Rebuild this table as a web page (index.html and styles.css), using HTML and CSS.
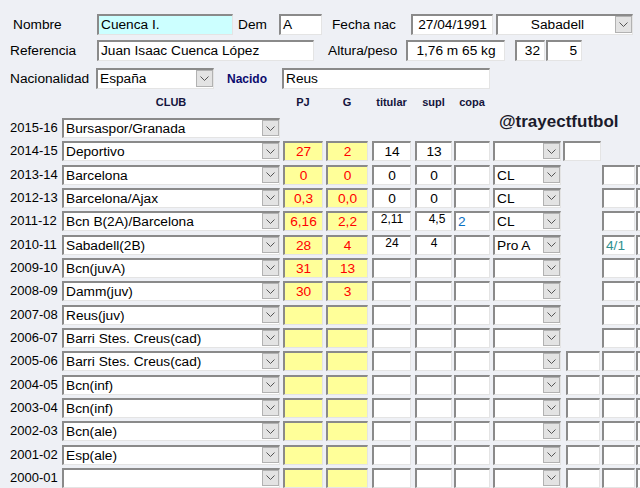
FILE: index.html
```html
<!DOCTYPE html>
<html>
<head>
<meta charset="utf-8">
<link rel="stylesheet" href="styles.css">
</head>
<body>
<div class="form">
  <div class="frow r1">
    <span class="lbl l-nombre">Nombre</span>
    <div class="box tall cyan w-nombre">Cuenca I.</div>
    <span class="lbl l-dem">Dem</span>
    <div class="box tall w-dem">A</div>
    <span class="lbl l-fecha">Fecha nac</span>
    <div class="box tall center w-fecha">27/04/1991</div>
    <div class="box tall sel w-ciudad"><span class="txt center">Sabadell</span><span class="btn"><svg width="9" height="5" viewBox="0 0 9 5"><path d="M0.5 0.5 L4.5 4.5 L8.5 0.5" fill="none" stroke="#555" stroke-width="1"/></svg></span></div>
  </div>
  <div class="frow r2">
    <span class="lbl l-ref">Referencia</span>
    <div class="box tall w-ref">Juan Isaac Cuenca López</div>
    <span class="lbl l-alt">Altura/peso</span>
    <div class="box tall center w-alt">1,76 m 65 kg</div>
    <div class="box tall right w-n1">32</div>
    <div class="box tall right w-n2">5</div>
  </div>
  <div class="frow r3">
    <span class="lbl l-nac">Nacionalidad</span>
    <div class="box tall sel w-nac"><span class="txt">España</span><span class="btn"><svg width="9" height="5" viewBox="0 0 9 5"><path d="M0.5 0.5 L4.5 4.5 L8.5 0.5" fill="none" stroke="#555" stroke-width="1"/></svg></span></div>
    <span class="lbl nacido">Nacido</span>
    <div class="box tall w-lugar">Reus</div>
  </div>
</div>

<div class="table">
  <div class="trow head">
    <span></span>
    <span class="h w-club">CLUB</span>
    <span class="h w-pj">PJ</span>
    <span class="h w-g">G</span>
    <span class="h w-tit">titular</span>
    <span class="h w-sup">supl</span>
    <span class="h w-copa">copa</span>
  </div>

  <div class="trow">
    <span class="year">2015-16</span>
    <div class="box sel w-club"><span class="txt">Bursaspor/Granada</span><span class="btn"><svg width="9" height="5" viewBox="0 0 9 5"><path d="M0.5 0.5 L4.5 4.5 L8.5 0.5" fill="none" stroke="#555" stroke-width="1"/></svg></span></div>
    <div class="tag">@trayectfutbol</div>
  </div>

  <div class="trow">
    <span class="year">2014-15</span>
    <div class="box sel w-club"><span class="txt">Deportivo</span><span class="btn"><svg width="9" height="5" viewBox="0 0 9 5"><path d="M0.5 0.5 L4.5 4.5 L8.5 0.5" fill="none" stroke="#555" stroke-width="1"/></svg></span></div>
    <div class="box yel red w-pj">27</div>
    <div class="box yel red w-g">2</div>
    <div class="box center w-tit">14</div>
    <div class="box center w-sup">13</div>
    <div class="box w-copa"></div>
    <div class="box sel w-comp"><span class="txt"></span><span class="btn"><svg width="9" height="5" viewBox="0 0 9 5"><path d="M0.5 0.5 L4.5 4.5 L8.5 0.5" fill="none" stroke="#555" stroke-width="1"/></svg></span></div>
    <div class="extras"><div class="box x-a"></div></div>
  </div>

  <div class="trow">
    <span class="year">2013-14</span>
    <div class="box sel w-club"><span class="txt">Barcelona</span><span class="btn"><svg width="9" height="5" viewBox="0 0 9 5"><path d="M0.5 0.5 L4.5 4.5 L8.5 0.5" fill="none" stroke="#555" stroke-width="1"/></svg></span></div>
    <div class="box yel red w-pj">0</div>
    <div class="box yel red w-g">0</div>
    <div class="box center w-tit">0</div>
    <div class="box center w-sup">0</div>
    <div class="box w-copa"></div>
    <div class="box sel w-comp"><span class="txt">CL</span><span class="btn"><svg width="9" height="5" viewBox="0 0 9 5"><path d="M0.5 0.5 L4.5 4.5 L8.5 0.5" fill="none" stroke="#555" stroke-width="1"/></svg></span></div>
    <div class="extras ex-b"><div class="box x-2"></div><div class="box x-3"></div></div>
  </div>

  <div class="trow">
    <span class="year">2012-13</span>
    <div class="box sel w-club"><span class="txt">Barcelona/Ajax</span><span class="btn"><svg width="9" height="5" viewBox="0 0 9 5"><path d="M0.5 0.5 L4.5 4.5 L8.5 0.5" fill="none" stroke="#555" stroke-width="1"/></svg></span></div>
    <div class="box yel red w-pj">0,3</div>
    <div class="box yel red w-g">0,0</div>
    <div class="box center w-tit">0</div>
    <div class="box center w-sup">0</div>
    <div class="box w-copa"></div>
    <div class="box sel w-comp"><span class="txt">CL</span><span class="btn"><svg width="9" height="5" viewBox="0 0 9 5"><path d="M0.5 0.5 L4.5 4.5 L8.5 0.5" fill="none" stroke="#555" stroke-width="1"/></svg></span></div>
    <div class="extras ex-b"><div class="box x-2"></div><div class="box x-3"></div></div>
  </div>

  <div class="trow">
    <span class="year">2011-12</span>
    <div class="box sel w-club"><span class="txt">Bcn B(2A)/Barcelona</span><span class="btn"><svg width="9" height="5" viewBox="0 0 9 5"><path d="M0.5 0.5 L4.5 4.5 L8.5 0.5" fill="none" stroke="#555" stroke-width="1"/></svg></span></div>
    <div class="box yel red w-pj">6,16</div>
    <div class="box yel red w-g">2,2</div>
    <div class="box center small w-tit">2,11</div>
    <div class="box center small w-sup"><span class="nudge">4,5</span></div>
    <div class="box blue w-copa">2</div>
    <div class="box sel w-comp"><span class="txt">CL</span><span class="btn"><svg width="9" height="5" viewBox="0 0 9 5"><path d="M0.5 0.5 L4.5 4.5 L8.5 0.5" fill="none" stroke="#555" stroke-width="1"/></svg></span></div>
    <div class="extras ex-b"><div class="box x-2"></div><div class="box x-3"></div></div>
  </div>

  <div class="trow">
    <span class="year">2010-11</span>
    <div class="box sel w-club"><span class="txt">Sabadell(2B)</span><span class="btn"><svg width="9" height="5" viewBox="0 0 9 5"><path d="M0.5 0.5 L4.5 4.5 L8.5 0.5" fill="none" stroke="#555" stroke-width="1"/></svg></span></div>
    <div class="box yel red w-pj">28</div>
    <div class="box yel red w-g">4</div>
    <div class="box center small w-tit">24</div>
    <div class="box center small w-sup">4</div>
    <div class="box w-copa"></div>
    <div class="box sel w-comp"><span class="txt">Pro A</span><span class="btn"><svg width="9" height="5" viewBox="0 0 9 5"><path d="M0.5 0.5 L4.5 4.5 L8.5 0.5" fill="none" stroke="#555" stroke-width="1"/></svg></span></div>
    <div class="extras ex-b"><div class="box teal x-2">4/1</div><div class="box x-3"></div></div>
  </div>

  <div class="trow">
    <span class="year">2009-10</span>
    <div class="box sel w-club"><span class="txt">Bcn(juvA)</span><span class="btn"><svg width="9" height="5" viewBox="0 0 9 5"><path d="M0.5 0.5 L4.5 4.5 L8.5 0.5" fill="none" stroke="#555" stroke-width="1"/></svg></span></div>
    <div class="box yel red w-pj">31</div>
    <div class="box yel red w-g">13</div>
    <div class="box w-tit"></div>
    <div class="box w-sup"></div>
    <div class="box w-copa"></div>
    <div class="box sel w-comp"><span class="txt"></span><span class="btn"><svg width="9" height="5" viewBox="0 0 9 5"><path d="M0.5 0.5 L4.5 4.5 L8.5 0.5" fill="none" stroke="#555" stroke-width="1"/></svg></span></div>
    <div class="extras ex-b"><div class="box x-2"></div><div class="box x-3"></div></div>
  </div>

  <div class="trow">
    <span class="year">2008-09</span>
    <div class="box sel w-club"><span class="txt">Damm(juv)</span><span class="btn"><svg width="9" height="5" viewBox="0 0 9 5"><path d="M0.5 0.5 L4.5 4.5 L8.5 0.5" fill="none" stroke="#555" stroke-width="1"/></svg></span></div>
    <div class="box yel red w-pj">30</div>
    <div class="box yel red w-g">3</div>
    <div class="box w-tit"></div>
    <div class="box w-sup"></div>
    <div class="box w-copa"></div>
    <div class="box sel w-comp"><span class="txt"></span><span class="btn"><svg width="9" height="5" viewBox="0 0 9 5"><path d="M0.5 0.5 L4.5 4.5 L8.5 0.5" fill="none" stroke="#555" stroke-width="1"/></svg></span></div>
    <div class="extras ex-b"><div class="box x-2"></div><div class="box x-3"></div></div>
  </div>

  <div class="trow">
    <span class="year">2007-08</span>
    <div class="box sel w-club"><span class="txt">Reus(juv)</span><span class="btn"><svg width="9" height="5" viewBox="0 0 9 5"><path d="M0.5 0.5 L4.5 4.5 L8.5 0.5" fill="none" stroke="#555" stroke-width="1"/></svg></span></div>
    <div class="box yel w-pj"></div>
    <div class="box yel w-g"></div>
    <div class="box w-tit"></div>
    <div class="box w-sup"></div>
    <div class="box w-copa"></div>
    <div class="box sel w-comp"><span class="txt"></span><span class="btn"><svg width="9" height="5" viewBox="0 0 9 5"><path d="M0.5 0.5 L4.5 4.5 L8.5 0.5" fill="none" stroke="#555" stroke-width="1"/></svg></span></div>
    <div class="extras ex-b"><div class="box x-2"></div><div class="box x-3"></div></div>
  </div>

  <div class="trow">
    <span class="year">2006-07</span>
    <div class="box sel w-club"><span class="txt">Barri Stes. Creus(cad)</span><span class="btn"><svg width="9" height="5" viewBox="0 0 9 5"><path d="M0.5 0.5 L4.5 4.5 L8.5 0.5" fill="none" stroke="#555" stroke-width="1"/></svg></span></div>
    <div class="box yel w-pj"></div>
    <div class="box yel w-g"></div>
    <div class="box w-tit"></div>
    <div class="box w-sup"></div>
    <div class="box w-copa"></div>
    <div class="box sel w-comp"><span class="txt"></span><span class="btn"><svg width="9" height="5" viewBox="0 0 9 5"><path d="M0.5 0.5 L4.5 4.5 L8.5 0.5" fill="none" stroke="#555" stroke-width="1"/></svg></span></div>
    <div class="extras ex-b"><div class="box x-2"></div><div class="box x-3"></div></div>
  </div>

  <div class="trow">
    <span class="year">2005-06</span>
    <div class="box sel w-club"><span class="txt">Barri Stes. Creus(cad)</span><span class="btn"><svg width="9" height="5" viewBox="0 0 9 5"><path d="M0.5 0.5 L4.5 4.5 L8.5 0.5" fill="none" stroke="#555" stroke-width="1"/></svg></span></div>
    <div class="box yel w-pj"></div>
    <div class="box yel w-g"></div>
    <div class="box w-tit"></div>
    <div class="box w-sup"></div>
    <div class="box w-copa"></div>
    <div class="box sel w-comp"><span class="txt"></span><span class="btn"><svg width="9" height="5" viewBox="0 0 9 5"><path d="M0.5 0.5 L4.5 4.5 L8.5 0.5" fill="none" stroke="#555" stroke-width="1"/></svg></span></div>
    <div class="extras ex-c"><div class="box x-1"></div><div class="box x-2"></div><div class="box x-3"></div></div>
  </div>

  <div class="trow">
    <span class="year">2004-05</span>
    <div class="box sel w-club"><span class="txt">Bcn(inf)</span><span class="btn"><svg width="9" height="5" viewBox="0 0 9 5"><path d="M0.5 0.5 L4.5 4.5 L8.5 0.5" fill="none" stroke="#555" stroke-width="1"/></svg></span></div>
    <div class="box yel w-pj"></div>
    <div class="box yel w-g"></div>
    <div class="box w-tit"></div>
    <div class="box w-sup"></div>
    <div class="box w-copa"></div>
    <div class="box sel w-comp"><span class="txt"></span><span class="btn"><svg width="9" height="5" viewBox="0 0 9 5"><path d="M0.5 0.5 L4.5 4.5 L8.5 0.5" fill="none" stroke="#555" stroke-width="1"/></svg></span></div>
    <div class="extras ex-c"><div class="box x-1"></div><div class="box x-2"></div><div class="box x-3"></div></div>
  </div>

  <div class="trow">
    <span class="year">2003-04</span>
    <div class="box sel w-club"><span class="txt">Bcn(inf)</span><span class="btn"><svg width="9" height="5" viewBox="0 0 9 5"><path d="M0.5 0.5 L4.5 4.5 L8.5 0.5" fill="none" stroke="#555" stroke-width="1"/></svg></span></div>
    <div class="box yel w-pj"></div>
    <div class="box yel w-g"></div>
    <div class="box w-tit"></div>
    <div class="box w-sup"></div>
    <div class="box w-copa"></div>
    <div class="box sel w-comp"><span class="txt"></span><span class="btn"><svg width="9" height="5" viewBox="0 0 9 5"><path d="M0.5 0.5 L4.5 4.5 L8.5 0.5" fill="none" stroke="#555" stroke-width="1"/></svg></span></div>
    <div class="extras ex-c"><div class="box x-1"></div><div class="box x-2"></div><div class="box x-3"></div></div>
  </div>

  <div class="trow">
    <span class="year">2002-03</span>
    <div class="box sel w-club"><span class="txt">Bcn(ale)</span><span class="btn"><svg width="9" height="5" viewBox="0 0 9 5"><path d="M0.5 0.5 L4.5 4.5 L8.5 0.5" fill="none" stroke="#555" stroke-width="1"/></svg></span></div>
    <div class="box yel w-pj"></div>
    <div class="box yel w-g"></div>
    <div class="box w-tit"></div>
    <div class="box w-sup"></div>
    <div class="box w-copa"></div>
    <div class="box sel w-comp"><span class="txt"></span><span class="btn"><svg width="9" height="5" viewBox="0 0 9 5"><path d="M0.5 0.5 L4.5 4.5 L8.5 0.5" fill="none" stroke="#555" stroke-width="1"/></svg></span></div>
    <div class="extras ex-c"><div class="box x-1"></div><div class="box x-2"></div><div class="box x-3"></div></div>
  </div>

  <div class="trow">
    <span class="year">2001-02</span>
    <div class="box sel w-club"><span class="txt">Esp(ale)</span><span class="btn"><svg width="9" height="5" viewBox="0 0 9 5"><path d="M0.5 0.5 L4.5 4.5 L8.5 0.5" fill="none" stroke="#555" stroke-width="1"/></svg></span></div>
    <div class="box yel w-pj"></div>
    <div class="box yel w-g"></div>
    <div class="box w-tit"></div>
    <div class="box w-sup"></div>
    <div class="box w-copa"></div>
    <div class="box sel w-comp"><span class="txt"></span><span class="btn"><svg width="9" height="5" viewBox="0 0 9 5"><path d="M0.5 0.5 L4.5 4.5 L8.5 0.5" fill="none" stroke="#555" stroke-width="1"/></svg></span></div>
    <div class="extras ex-c"><div class="box x-1"></div><div class="box x-2"></div><div class="box x-3"></div></div>
  </div>

  <div class="trow">
    <span class="year">2000-01</span>
    <div class="box sel w-club"><span class="txt"></span><span class="btn"><svg width="9" height="5" viewBox="0 0 9 5"><path d="M0.5 0.5 L4.5 4.5 L8.5 0.5" fill="none" stroke="#555" stroke-width="1"/></svg></span></div>
    <div class="box yel w-pj"></div>
    <div class="box yel w-g"></div>
    <div class="box w-tit"></div>
    <div class="box w-sup"></div>
    <div class="box w-copa"></div>
    <div class="box sel w-comp"><span class="txt"></span><span class="btn"><svg width="9" height="5" viewBox="0 0 9 5"><path d="M0.5 0.5 L4.5 4.5 L8.5 0.5" fill="none" stroke="#555" stroke-width="1"/></svg></span></div>
    <div class="extras ex-c"><div class="box x-1"></div><div class="box x-2"></div><div class="box x-3"></div></div>
  </div>
</div>
</body>
</html>
```

FILE: styles.css
```css
* { box-sizing: border-box; }

html, body {
  margin: 0;
  width: 640px;
  height: 488px;
  overflow: hidden;
}

body {
  background: #eef0f5;
  font-family: "Liberation Sans", Arial, sans-serif;
  font-size: 13.7px;
  color: #000;
}

/* ---------- generic sunken controls ---------- */
.box {
  flex-shrink: 0;
  height: 20px;
  background: #fff;
  border-style: solid;
  border-width: 2px 1px 1px 2px;
  border-color: #8a8a8a #e4e4e4 #e4e4e4 #8a8a8a;
  padding: 0 2px;
  line-height: 17px;
  white-space: nowrap;
  overflow: hidden;
}
.box.tall { height: 21px; line-height: 18px; }

.cyan { background: #ccffff; }
.yel  { background: #ffff99; }
.center { text-align: center; }
.right { text-align: right; padding-right: 4px; }
.red { color: #ff0000; text-align: center; }
.blue { color: #0a6fc2; }
.teal { color: #2f8f8f; }
.small { font-size: 12px; line-height: 13px; }
.nudge { position: relative; left: 3px; }

.sel {
  display: flex;
  align-items: flex-start;
  padding-right: 0;
}
.sel .txt { flex: 1; overflow: hidden; }
.btn {
  flex-shrink: 0;
  width: 17px;
  height: 16px;
  background: #e3e3e3;
  border: 1px solid #b2b2b2;
  display: flex;
  align-items: center;
  justify-content: center;
}
.tall .btn { height: 17px; }

/* ---------- top form ---------- */
.form { padding-top: 14px; }
.frow { display: flex; align-items: center; }
.r2 { margin-top: 5px; padding-left: 10px; }
.r3 { margin-top: 7px; padding-left: 10px; }
.r1 { padding-left: 13px; }

.lbl { flex-shrink: 0; white-space: nowrap; }
.l-nombre { width: 84px; }
.w-nombre { width: 136px; }
.l-dem { margin-left: 5px; width: 41px; }
.w-dem { width: 43px; }
.l-fecha { margin-left: 10px; width: 79px; }
.w-fecha { width: 82px; }
.w-ciudad { margin-left: 3px; width: 137px; }

.l-ref { width: 87px; }
.w-ref { width: 217px; }
.l-alt { margin-left: 14px; width: 78px; }
.w-alt { width: 99px; }
.w-n1 { margin-left: 10px; width: 30px; }
.w-n2 { margin-left: 1px; width: 36px; }

.l-nac { width: 86px; }
.w-nac { width: 118px; }
.nacido {
  margin-left: 13px;
  width: 55px;
  font-weight: bold;
  font-size: 12px;
  color: #0b0b6e;
}
.w-lugar { width: 208px; }

/* ---------- season table ---------- */
.table { margin-top: 5px; }
.trow {
  display: grid;
  grid-template-columns: 62px 221px 43px 46px 43px 39px 39px 70px 77px;
  height: 23.33px;
  align-items: start;
}
.trow.head { height: 24px; }

.h {
  font-weight: bold;
  font-size: 11px;
  line-height: 16px;
  text-align: center;
  color: #14143c;
}

.year {
  padding-left: 10px;
  font-size: 13px;
  line-height: 20px;
  white-space: nowrap;
}

.w-club { width: 218px; }
.w-pj { width: 40px; }
.w-g { width: 42px; }
.w-tit { width: 39px; }
.w-sup { width: 37px; }
.w-copa { width: 36px; }
.w-comp { width: 68px; }

.tag {
  grid-column: 7 / 10;
  margin-left: 45px;
  margin-top: -6px;
  font-weight: bold;
  font-size: 17px;
  color: #1b1b2b;
  white-space: nowrap;
}

.extras { display: flex; overflow: hidden; }
.x-a { width: 38px; }
.x-1 { margin-left: 3px; width: 34px; }
.x-2 { margin-left: 2px; width: 33px; }
.ex-b .x-2 { margin-left: 39px; }
.x-3 { margin-left: 1px; width: 34px; }
```
